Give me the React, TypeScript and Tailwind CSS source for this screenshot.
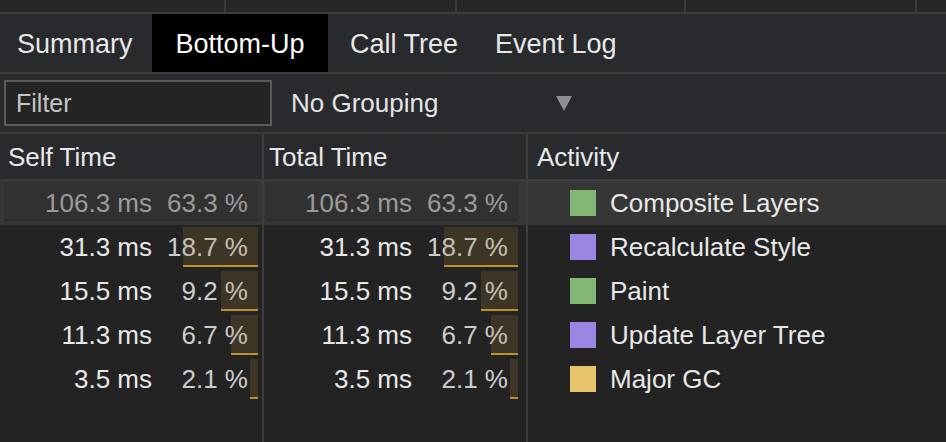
import React from "react";

type Row = {
  self: string;
  selfPct: string;
  total: string;
  totalPct: string;
  pct: number;
  name: string;
  color: string;
};

const rows: Row[] = [
  { self: "106.3 ms", selfPct: "63.3 %", total: "106.3 ms", totalPct: "63.3 %", pct: 63.3, name: "Composite Layers", color: "#82b675" },
  { self: "31.3 ms", selfPct: "18.7 %", total: "31.3 ms", totalPct: "18.7 %", pct: 18.7, name: "Recalculate Style", color: "#9a86e2" },
  { self: "15.5 ms", selfPct: "9.2 %", total: "15.5 ms", totalPct: "9.2 %", pct: 9.2, name: "Paint", color: "#82b675" },
  { self: "11.3 ms", selfPct: "6.7 %", total: "11.3 ms", totalPct: "6.7 %", pct: 6.7, name: "Update Layer Tree", color: "#9a86e2" },
  { self: "3.5 ms", selfPct: "2.1 %", total: "3.5 ms", totalPct: "2.1 %", pct: 2.1, name: "Major GC", color: "#e8c46c" },
];

const MAX = 63.3;

function TimeCell({ value, pctText, pct, selected, col }: { value: string; pctText: string; pct: number; selected: boolean; col: 1 | 2 }) {
  return (
    <div className={`h-[44px] ${col === 1 ? "pl-[4px] pr-[4px]" : "pl-[2px] pr-[8px]"} ${selected ? "bg-[#363636]" : ""}`}>
      <div className="relative h-full flex items-center justify-end pr-[10px]">
        <span className={selected ? "text-[#a9a9a9]" : "text-[#e8e8e8]"}>{value}</span>
        <span className={`w-[96px] text-right ${selected ? "text-[#a9a9a9]" : "text-[#cdcdcd]"}`}>{pctText}</span>
        {selected ? (
          <div
            className="absolute right-0 top-[1px] h-[39px] bg-[rgba(0,0,0,0.08)] border-b-2 border-[#2b2b2b] pointer-events-none"
            style={{ width: `${(pct / MAX) * 100}%` }}
          />
        ) : (
          <div
            className="absolute right-0 top-[2px] h-[40px] bg-[rgba(165,130,55,0.2)] border-b-2 border-[#c0922e] pointer-events-none"
            style={{ width: `${(pct / MAX) * 100}%` }}
          />
        )}
      </div>
    </div>
  );
}

export default function App() {
  const topCells = [226, 231, 229, 231];
  return (
    <div className="w-[946px] h-[442px] overflow-hidden bg-[#232323] font-['Liberation_Sans',Arial,sans-serif] text-[26px] leading-none text-[#e8e8e8] flex flex-col">
      {/* top strip */}
      <div className="h-[12px] bg-[#262626] flex shrink-0">
        {topCells.map((w, i) => (
          <div key={i} className="h-full border-r-2 border-[#3a3a3a]" style={{ width: w }} />
        ))}
        <div className="flex-1" />
      </div>
      <div className="h-[2px] bg-[#3d3d3d] shrink-0" />

      {/* tabs */}
      <div className="h-[58px] bg-[#292a2d] flex items-stretch shrink-0 text-[27px]">
        <div className="w-[152px] pl-[17px] pt-[2px] flex items-center">Summary</div>
        <div className="w-[176px] pt-[2px] flex items-center justify-center bg-black text-white">Bottom-Up</div>
        <div className="w-[145px] pl-[22px] pt-[2px] flex items-center">Call Tree</div>
        <div className="pl-[22px] pr-[22px] pt-[2px] flex items-center">Event Log</div>
      </div>
      <div className="h-[2px] bg-[#3d3d3d] shrink-0" />

      {/* filter row */}
      <div className="h-[58px] bg-[#292a2d] flex items-center shrink-0">
        <div className="ml-[4px] w-[268px] h-[46px] border-2 border-[#5a5a5a] bg-[#242424] flex items-center pl-[10px] text-[25px] text-[#c4c4c4]">
          Filter
        </div>
        <div className="ml-[19px] w-[281px] flex items-center justify-between">
          <span className="text-[#e4e4e4]">No Grouping</span>
          <svg width="16" height="15" viewBox="0 0 16 15">
            <polygon points="0,0 16,0 8,15" fill="#8f8f8f" />
          </svg>
        </div>
      </div>
      <div className="h-[2px] bg-[#3d3d3d] shrink-0" />

      {/* table */}
      <div className="flex-1 flex">
        <div className="w-[264px] border-r-2 border-[#3d3d3d] flex flex-col">
          <div className="h-[47px] bg-[#292a2d] border-b-2 border-[#3d3d3d] flex items-center pl-[8px]">Self Time</div>
          {rows.map((r, i) => (
            <TimeCell key={i} value={r.self} pctText={r.selfPct} pct={r.pct} selected={i === 0} col={1} />
          ))}
        </div>
        <div className="w-[264px] border-r-2 border-[#3d3d3d] flex flex-col">
          <div className="h-[47px] bg-[#292a2d] border-b-2 border-[#3d3d3d] flex items-center pl-[5px]">Total Time</div>
          {rows.map((r, i) => (
            <TimeCell key={i} value={r.total} pctText={r.totalPct} pct={r.pct} selected={i === 0} col={2} />
          ))}
        </div>
        <div className="flex-1 flex flex-col">
          <div className="h-[47px] bg-[#292a2d] border-b-2 border-[#3d3d3d] flex items-center pl-[9px]">Activity</div>
          {rows.map((r, i) => (
            <div key={i} className={`h-[44px] flex items-center pl-[42px] gap-[14px] ${i === 0 ? "bg-[#363636]" : ""}`}>
              <div className="w-[26px] h-[26px]" style={{ backgroundColor: r.color }} />
              <span>{r.name}</span>
            </div>
          ))}
        </div>
      </div>
    </div>
  );
}
